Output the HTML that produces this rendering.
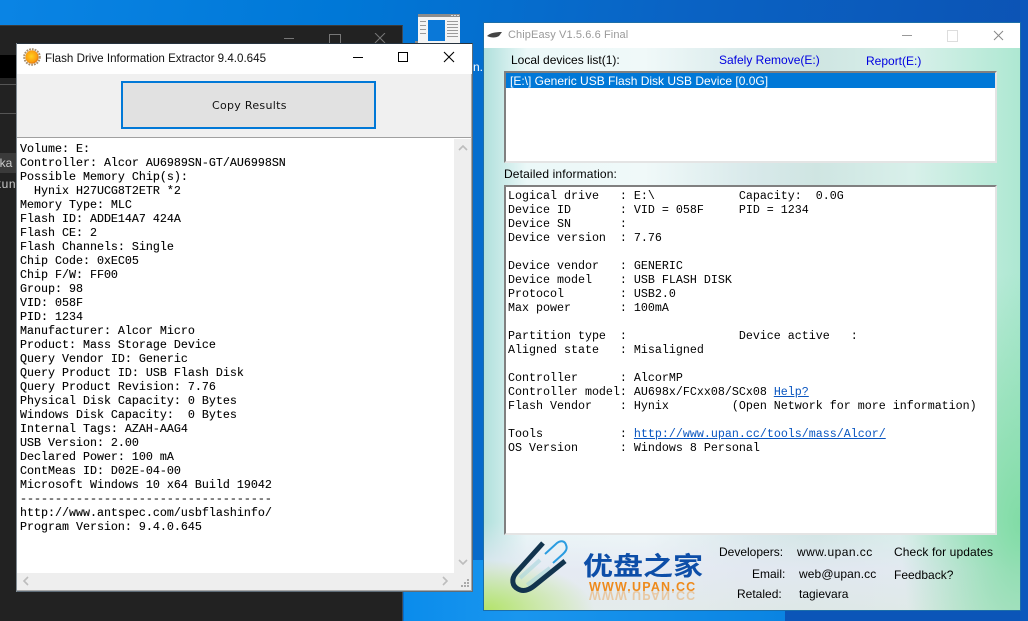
<!DOCTYPE html>
<html><head><meta charset="utf-8"><style>
html,body{margin:0;padding:0}
body{width:1028px;height:621px;overflow:hidden;position:relative;background:#0078d7;font-family:"Liberation Sans",sans-serif}
div,pre,span.a{position:absolute}
.t{white-space:pre;line-height:14px}
pre{margin:0;font:11.67px/14px "Liberation Mono",monospace;color:#000}
.c{font-size:12px;color:#000;white-space:pre;line-height:14px}
.l{color:#0000e0}
</style></head><body>
<div style="left:0;top:0;width:1028px;height:621px;background:linear-gradient(100deg,#0a84e4 0%,#0078d7 30%,#0a63c4 60%,#0c4fb0 100%)"></div>
<div style="left:404px;top:560px;width:381px;height:61px;background:linear-gradient(90deg,#0a8cec,#1a96ee 30%,#0a84e2 100%)"></div>
<div style="left:785px;top:610px;width:243px;height:11px;background:#0b55b8"></div>
<div style="left:1020px;top:0;width:8px;height:621px;background:#0b58bc"></div>
<div style="left:0;top:25px;width:403px;height:596px;background:#222;border-top:1px solid #3a3a3a;border-right:1px solid #3a4a5a;box-sizing:border-box"></div>
<div style="left:0;top:55px;width:16px;height:23px;background:#000"></div>
<div style="left:0;top:84px;width:16px;height:1px;background:#555"></div>
<div style="left:0;top:113px;width:16px;height:1px;background:#555"></div>
<div style="left:0;top:153px;width:16px;height:20px;background:#3a3a3a"></div>
<div class="t" style="left:-3px;top:156px;font-size:12px;color:#ccc">ika</div>
<div class="t" style="left:-5px;top:177px;font-size:12px;color:#ccc;letter-spacing:.6px">kun</div>
<div style="left:284px;top:38px;width:10px;height:1px;background:#777"></div>
<div style="left:329px;top:34px;width:10px;height:9px;border:1px solid #777"></div>
<svg style="position:absolute;left:374px;top:33px" width="12" height="10"><path d="M1 0L11 10M11 0L1 10" stroke="#777"/></svg>

<!-- desktop icon -->
<div style="left:415px;top:41px;width:10px;height:2px;background:#888"></div>
<div style="left:418px;top:14px;width:42px;height:29px;background:#f4f4f4;border-top:3px solid #8c8c8c;box-sizing:border-box"></div>
<div style="left:428px;top:20px;width:17px;height:21px;background:#0a78d8"></div>
<svg style="position:absolute;left:418px;top:14px" width="42" height="29"><path d="M2 7.5h6M2 11.5h6M2 15.5h6M2 19.5h6M29 7.5h11M29 10.5h11M29 13.5h11M29 16.5h11M29 19.5h11M29 22.5h11" stroke="#9a9a9a"/><path d="M33 1.5h2M36 1.5h2M39 1.5h2" stroke="#ddd"/></svg>
<div class="t" style="left:473px;top:60px;font-size:12px;color:#fff">n.</div>

<!-- left window -->
<div style="left:16px;top:43px;width:457px;height:549px;background:#fff;border:1px solid #5e6c78;border-top-color:#26333f;border-left:0;box-sizing:border-box"></div>
<div style="left:16px;top:43px;width:1px;height:549px;background:#808a92"></div>
<div style="left:17px;top:74px;width:455px;height:63px;background:#f0f0f0"></div>
<div style="left:17px;top:137px;width:455px;height:1px;background:#a0a0a0"></div>
<div style="left:471px;top:74px;width:1px;height:516px;background:#a8a8a8"></div>
<div style="left:17px;top:590px;width:455px;height:1px;background:#a8a8a8"></div>
<svg style="position:absolute;left:23px;top:48px" width="18" height="18" viewBox="0 0 18 18"><defs><radialGradient id="s" cx=".45" cy=".45" r=".6"><stop offset="0" stop-color="#ffd020"/><stop offset=".7" stop-color="#fba010"/><stop offset="1" stop-color="#d9680c"/></radialGradient></defs><circle cx="9" cy="9" r="7.8" fill="none" stroke="#a8906e" stroke-width="2" stroke-dasharray="1.8 1"/><circle cx="9" cy="9" r="6.6" fill="url(#s)"/></svg>
<div class="t" style="left:45px;top:52px;font-size:11.6px;color:#111">Flash Drive Information Extractor 9.4.0.645</div>
<div style="left:353px;top:57px;width:10px;height:1px;background:#000"></div>
<div style="left:398px;top:52px;width:8px;height:8px;border:1px solid #000"></div>
<svg style="position:absolute;left:443px;top:51px" width="12" height="12"><path d="M1 1L11 11M11 1L1 11" stroke="#000" stroke-width="1.1"/></svg>
<div style="left:121px;top:81px;width:255px;height:48px;background:#e1e1e1;border:2px solid #0078d7;box-sizing:border-box"></div>
<div class="t" style="left:212px;top:99px;font:11px/14px 'DejaVu Sans',sans-serif;color:#111;letter-spacing:.3px">Copy Results</div>
<div style="left:17px;top:138px;width:454px;height:452px;background:#fff"></div>
<div style="left:454px;top:139px;width:17px;height:451px;background:#eee"></div>
<div style="left:17px;top:573px;width:454px;height:17px;background:#eee"></div>
<svg style="position:absolute;left:454px;top:139px" width="18" height="451" fill="none" stroke="#bdbdbd" stroke-width="1.6"><path d="M5 11l4-4 4 4M5 421l4 4 4-4"/></svg>
<svg style="position:absolute;left:17px;top:573px" width="455" height="17" fill="none" stroke="#bdbdbd" stroke-width="1.6"><path d="M11 4l-4 4 4 4M426 4l4 4-4 4"/></svg>
<svg style="position:absolute;left:458px;top:578px" width="13" height="12" fill="#aaa"><path d="M9 1h2v2H9zM6 4h2v2H6zM9 4h2v2H9zM3 7h2v2H3zM6 7h2v2H6zM9 7h2v2H9z"/></svg>
<pre style="left:20px;top:142px;-webkit-text-stroke:.1px #000">Volume: E:
Controller: Alcor AU6989SN-GT/AU6998SN
Possible Memory Chip(s):
  Hynix H27UCG8T2ETR *2
Memory Type: MLC
Flash ID: ADDE14A7 424A
Flash CE: 2
Flash Channels: Single
Chip Code: 0xEC05
Chip F/W: FF00
Group: 98
VID: 058F
PID: 1234
Manufacturer: Alcor Micro
Product: Mass Storage Device
Query Vendor ID: Generic
Query Product ID: USB Flash Disk
Query Product Revision: 7.76
Physical Disk Capacity: 0 Bytes
Windows Disk Capacity:  0 Bytes
Internal Tags: AZAH-AAG4
USB Version: 2.00
Declared Power: 100 mA
ContMeas ID: D02E-04-00
Microsoft Windows 10 x64 Build 19042
------------------------------------
http://www.antspec.com/usbflashinfo/
Program Version: 9.4.0.645</pre>

<!-- right window -->
<div style="left:483px;top:22px;width:538px;height:589px;border:1px solid #1c6ea8;box-sizing:border-box;background:
radial-gradient(ellipse 110px 50px at 0 100%,#b4e46a 0%,rgba(180,228,106,0) 100%),
radial-gradient(ellipse 120px 250px at 100% 85%,#82dca6 0%,rgba(130,220,166,0) 100%),
linear-gradient(180deg,rgba(255,255,255,0) 85%,rgba(228,232,242,.85) 93%,rgba(225,232,232,.8) 100%),
linear-gradient(90deg,#b0e0dc 0%,#ebf8f8 8%,#f0f9f9 30%,#d8e9ea 50%,#cfe5e2 62%,#d8f0ea 80%,#aee8d2 100%)"></div>
<div style="left:484px;top:23px;width:536px;height:25px;background:#fff"></div>
<svg style="position:absolute;left:486px;top:30px" width="18" height="10"><path d="M1 6C4 3 9 2 16 2L13 6C10 8 5 8 1 6Z" fill="#444"/></svg>
<div class="t" style="left:508px;top:28px;font-size:11px;color:#999;letter-spacing:.1px">ChipEasy V1.5.6.6 Final</div>
<div style="left:902px;top:35px;width:10px;height:1px;background:#999"></div>
<div style="left:947px;top:30px;width:9px;height:10px;border:1px solid #ddd"></div>
<svg style="position:absolute;left:993px;top:30px" width="11" height="11"><path d="M1 1L10 10M10 1L1 10" stroke="#888"/></svg>
<div class="c" style="left:511px;top:53px">Local devices list(1):</div>
<div class="c l" style="left:719px;top:53px">Safely Remove(E:)</div>
<div class="c l" style="left:866px;top:54px">Report(E:)</div>
<div style="left:504px;top:71px;width:493px;height:92px;background:#fff;border:2px solid #e4e4e4;border-top-color:#808080;border-left-color:#808080;box-sizing:border-box"></div>
<div style="left:506px;top:73px;width:489px;height:15px;background:#0078d7"></div>
<div class="c" style="left:510px;top:74px;color:#fff">[E:\] Generic USB Flash Disk USB Device [0.0G]</div>
<div class="c" style="left:504px;top:167px;letter-spacing:.14px">Detailed information:</div>
<div style="left:504px;top:185px;width:493px;height:350px;background:#fff;border:2px solid #e4e4e4;border-top-color:#808080;border-left-color:#808080;box-sizing:border-box"></div>
<pre style="left:508px;top:189px">Logical drive   : E:\            Capacity:  0.0G
Device ID       : VID = 058F     PID = 1234
Device SN       :
Device version  : 7.76

Device vendor   : GENERIC
Device model    : USB FLASH DISK
Protocol        : USB2.0
Max power       : 100mA

Partition type  :                Device active   :
Aligned state   : Misaligned

Controller      : AlcorMP
Controller model: AU698x/FCxx08/SCx08 <span style="color:#0a56c0;text-decoration:underline">Help?</span>
Flash Vendor    : Hynix         (Open Network for more information)

Tools           : <span style="color:#0a56c0;text-decoration:underline">http://www.upan.cc/tools/mass/Alcor/</span>
OS Version      : Windows 8 Personal</pre>

<!-- logo -->
<svg style="position:absolute;left:508px;top:538px" width="76" height="62" fill="none"><path d="M19 47L42 30M12 40L32 22" stroke="#a8d6dc" stroke-width="4" opacity=".6"/><path d="M35 5L8 35C3 41 4 48 10 51C15 54 21 52 26 48L57 23" stroke="#12344e" stroke-width="5"/><path d="M37 16L49 5C53 2 57 3 58 7C60 11 57 14 55 16L45 25" stroke="#2a9ce0" stroke-width="2"/></svg>
<div class="t" style="left:583px;top:550px;width:122px;font:700 30px/32px 'Noto Sans CJK SC',sans-serif;color:#0d4ea8;transform:scaleY(.86);transform-origin:50% 0">优盘之家</div>
<div class="t" style="left:589px;top:580px;font:700 12.5px/14px 'Liberation Sans',sans-serif;color:#ee8a1c;letter-spacing:1.2px">WWW.UPAN.CC</div>
<div class="t" style="left:589px;top:588px;font:700 12.5px/14px 'Liberation Sans',sans-serif;color:#ee8a1c;letter-spacing:1.2px;opacity:.35;transform:scaleY(-1)">WWW.UPAN.CC</div>

<div class="c" style="left:719px;top:545px">Developers:</div>
<div class="c" style="left:797px;top:545px;letter-spacing:.45px">www.upan.cc</div>
<div class="c" style="left:894px;top:545px;letter-spacing:.1px">Check for updates</div>
<div class="c" style="left:752px;top:567px">Email:</div>
<div class="c" style="left:799px;top:567px;letter-spacing:.1px">web@upan.cc</div>
<div class="c" style="left:894px;top:568px">Feedback?</div>
<div class="c" style="left:737px;top:587px">Retaled:</div>
<div class="c" style="left:799px;top:587px">tagievara</div>
</body></html>
